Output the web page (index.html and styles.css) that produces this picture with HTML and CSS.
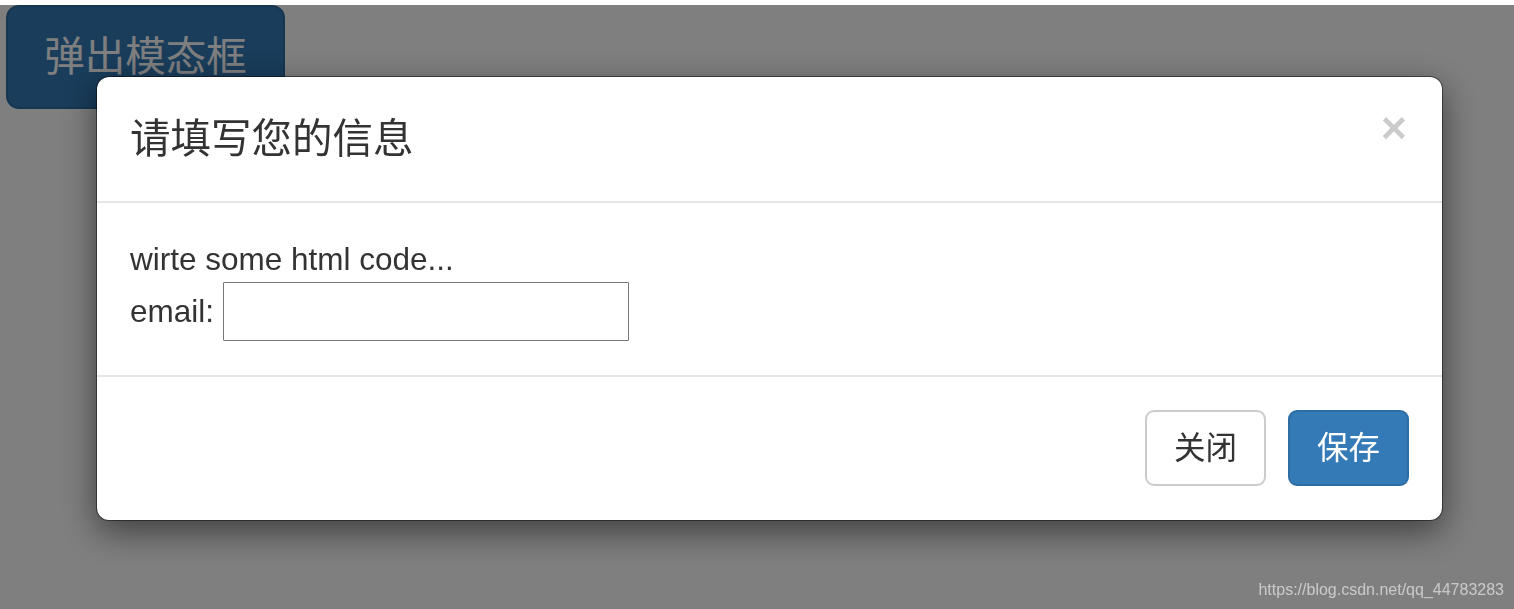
FILE: index.html
```html
<!DOCTYPE html>
<html lang="zh-CN">
<head>
    <meta charset="UTF-8">
    <meta name="viewport" content="width=device-width, initial-scale=1.0">
    <title>模态框</title>
    <link rel="stylesheet" href="styles.css">
</head>
<body>

    <!-- Page content -->
    <div class="page">
        <button class="btn btn-primary btn-lg" type="button">弹出模态框</button>
    </div>

    <!-- Backdrop -->
    <div class="modal-backdrop"></div>

    <!-- Modal -->
    <div class="modal-dialog">
        <div class="modal-content">
            <div class="modal-header">
                <h4 class="modal-title">请填写您的信息</h4>
                <button class="close" type="button">&times;</button>
            </div>
            <div class="modal-body">
                <div>wirte some html code...</div>
                <div class="field">
                    <label for="email">email:</label>
                    <input id="email" class="email-input" type="text">
                </div>
            </div>
            <div class="modal-footer">
                <button class="btn btn-default" type="button">关闭</button>
                <button class="btn btn-primary" type="button">保存</button>
            </div>
        </div>
    </div>

    <div class="watermark">https://blog.csdn.net/qq_44783283</div>

</body>
</html>
```

FILE: styles.css
```css
body, html {
    margin: 0;
    padding: 0;
    background: #fff;
    font-family: 'Liberation Sans', 'Noto Sans CJK SC', sans-serif;
    color: #333;
    overflow: hidden;
    height: 100%;
}

/* Page */
.page {
    padding: 5px 0 0 6px;
}

.btn {
    display: inline-block;
    box-sizing: border-box;
    font-family: 'Liberation Sans', 'Noto Sans CJK SC', sans-serif;
    font-size: 31.5px;
    line-height: 45px;
    padding: 13px 27px;
    border: 2px solid transparent;
    border-radius: 9px;
    cursor: pointer;
}

.btn-primary {
    background-color: #337ab7;
    border-color: #2e6da4;
    color: #fff;
}

.btn-default {
    background-color: #fff;
    border-color: #ccc;
    color: #333;
}

.btn-lg {
    width: 279px;
    height: 104px;
    font-size: 40.5px;
    line-height: 54px;
    padding: 22px 36px;
    border-radius: 13px;
}

/* Backdrop */
.modal-backdrop {
    position: fixed;
    top: 5px;
    left: 0;
    right: 0;
    bottom: 0;
    background: rgba(0, 0, 0, 0.5);
}

/* Modal */
.modal-dialog {
    position: fixed;
    top: 76px;
    left: 96px;
    width: 1347px;
}

.modal-content {
    background: #fff;
    border: 1px solid rgba(0, 0, 0, 0.45);
    border-radius: 13px;
    box-shadow: 0 11px 34px rgba(0, 0, 0, 0.5);
    background-clip: padding-box;
}

.modal-header {
    display: flex;
    justify-content: space-between;
    align-items: flex-start;
    padding: 33px;
    border-bottom: 2px solid #e5e5e5;
}

.modal-title {
    margin: 0;
    font-size: 40.5px;
    font-weight: normal;
    line-height: 58px;
    color: #333;
}

.close {
    background: none;
    border: 0;
    padding: 0;
    margin-top: -6px;
    margin-right: 2px;
    font-family: 'Liberation Sans', sans-serif;
    font-size: 45px;
    font-weight: bold;
    line-height: 47px;
    color: #000;
    opacity: 0.2;
    cursor: pointer;
}

.modal-body {
    padding: 34px 33px;
    font-size: 31.5px;
    line-height: 45px;
}

.field {
    display: flex;
    align-items: center;
    gap: 9px;
}

.email-input {
    box-sizing: border-box;
    width: 406px;
    height: 59px;
    border: 1px solid #767676;
    border-radius: 1px;
    margin: 0;
}

.modal-footer {
    display: flex;
    justify-content: flex-end;
    gap: 22px;
    padding: 33px 33px 34px;
    border-top: 2px solid #e5e5e5;
}

.modal-footer .btn {
    width: 121px;
    height: 76px;
    padding: 0;
}

/* Watermark */
.watermark {
    position: fixed;
    right: 10px;
    bottom: 10px;
    font-size: 16px;
    color: rgba(255, 255, 255, 0.58);
}
```
